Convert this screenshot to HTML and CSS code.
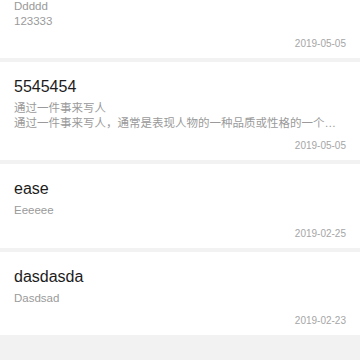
FILE: index.html
```html
<!DOCTYPE html>
<html lang="zh-CN">
<head>
  <meta charset="UTF-8" />
  <meta name="viewport" content="width=device-width, initial-scale=1.0"/>
  <title>Notes</title>

  <link rel="stylesheet" href="styles.css">
</head>
<body>

  <!-- Note list (scrolled a little, first card is cut at the top) -->
  <section class="note-list">

    <div class="note-card">
      <h2 class="note-title">dddd</h2>
      <p class="note-desc">Ddddd</p>
      <p class="note-desc">123333</p>
      <div class="note-date">2019-05-05</div>
    </div>

    <div class="note-card">
      <h2 class="note-title">5545454</h2>
      <p class="note-desc">通过一件事来写人</p>
      <p class="note-desc">通过一件事来写人，通常是表现人物的一种品质或性格的一个方面，选取典型事例。</p>
      <div class="note-date">2019-05-05</div>
    </div>

    <div class="note-card">
      <h2 class="note-title">ease</h2>
      <p class="note-desc">Eeeeee</p>
      <div class="note-date">2019-02-25</div>
    </div>

    <div class="note-card">
      <h2 class="note-title">dasdasda</h2>
      <p class="note-desc">Dasdsad</p>
      <div class="note-date">2019-02-23</div>
    </div>

  </section>

</body>
</html>
```

FILE: styles.css
```css
/* Reset & Base */
* {
  margin: 0;
  padding: 0;
  box-sizing: border-box;
}

body, html {
  font-family: 'Liberation Sans', 'Noto Sans CJK SC', sans-serif;
  background-color: #f2f2f2;
  color: #222;
  overflow: hidden;
}

.note-list {
  display: flex;
  flex-direction: column;
  gap: 4px;
  margin-top: -40px;
}

.note-card {
  background-color: #ffffff;
  padding: 14px 14px 7px;
}

.note-title {
  font-size: 16px;
  font-weight: normal;
  line-height: 22px;
  color: #1c1c1c;
  margin-bottom: 3px;
}

.note-desc {
  font-size: 11.5px;
  line-height: 14.5px;
  color: #9a9a9a;
  white-space: nowrap;
  overflow: hidden;
  text-overflow: ellipsis;
}

.note-date {
  margin-top: 9px;
  font-size: 10px;
  line-height: 14px;
  color: #a6a6a6;
  text-align: right;
}
```
